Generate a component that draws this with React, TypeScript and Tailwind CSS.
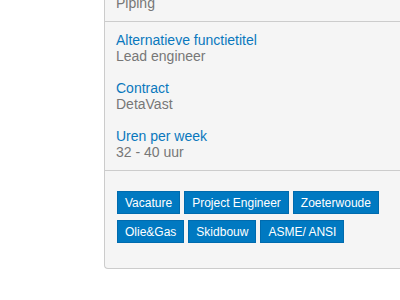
import React from "react";

const fields = [
  { label: "Alternatieve functietitel", value: "Lead engineer" },
  { label: "Contract", value: "DetaVast" },
  { label: "Uren per week", value: "32 - 40 uur" },
];

const tags = ["Vacature", "Project Engineer", "Zoeterwoude", "Olie&Gas", "Skidbouw", "ASME/ ANSI"];

export default function App() {
  return (
    <div
      className="w-[400px] h-[300px] overflow-hidden bg-white"
      style={{ fontFamily: '"Liberation Sans", Arial, sans-serif' }}
    >
      <div className="ml-[104px] -mt-[6px] bg-[#f5f5f5] border border-r-0 border-[#cccccc] rounded-bl-[4px]">
        {/* previous field, cut off at the top */}
        <div className="px-[11px] pb-[10px] border-b border-[#cccccc]">
          <p className="text-[14px] leading-[16px] text-[#777777]">Piping</p>
        </div>

        {/* Details */}
        <div className="px-[11px] py-[10px] border-b border-[#cccccc] flex flex-col gap-[16px]">
          {fields.map((f) => (
            <div key={f.label} className="text-[14px] leading-[16px]">
              <p className="text-[#0a78bd]">{f.label}</p>
              <p className="text-[#777777]">{f.value}</p>
            </div>
          ))}
        </div>

        {/* Tags */}
        <div className="pl-[12px] pr-[11px] pt-[20px] pb-[25px] flex flex-wrap gap-x-[4px] gap-y-[6px]">
          {tags.map((t) => (
            <span
              key={t}
              className="h-[23px] px-[7px] flex items-center bg-[#0079c1] border border-[#006bae] text-white text-[12px]"
            >
              {t}
            </span>
          ))}
        </div>
      </div>
    </div>
  );
}
